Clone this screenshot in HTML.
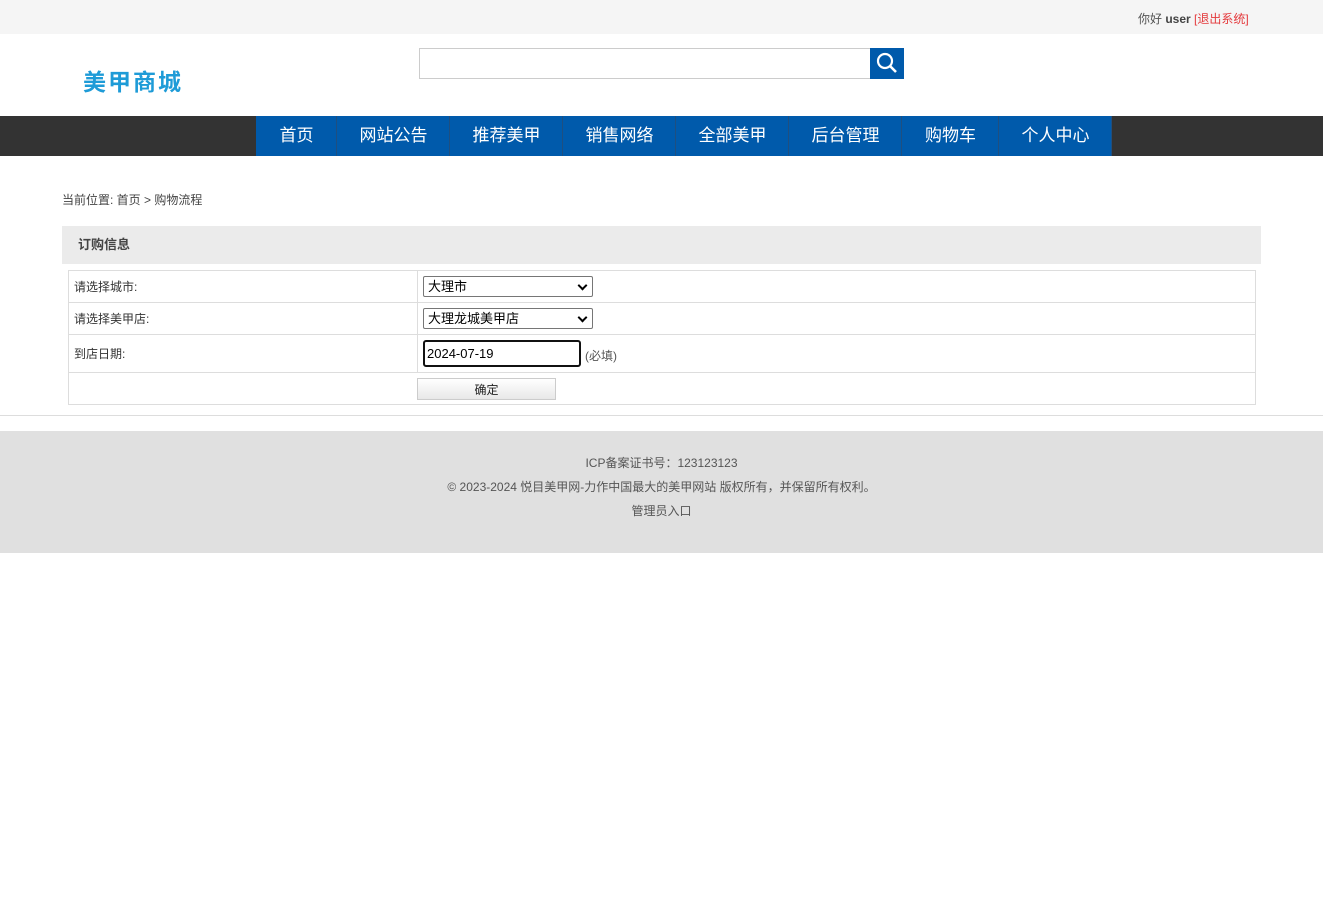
<!DOCTYPE html>
<html><head><meta charset="utf-8"><style>
*{margin:0;padding:0;box-sizing:border-box}
body{width:1323px;height:914px;background:#fff;font-family:"Liberation Sans","Microsoft YaHei","Noto Sans CJK SC",sans-serif;position:relative;overflow:hidden;color:#333}
.a{position:absolute}
.top{left:0;top:0;width:1323px;height:34px;background:#f5f5f5}
.nav{left:0;top:116px;width:1323px;height:40px;background:#333}
.nav div{position:absolute;top:0;height:40px;background:#005aab;color:#fff;font-size:17px;line-height:40px;text-align:center;box-shadow:inset -1px 0 0 #1f4f80}
.f12{font-size:12px}
.tbl{left:68px;top:270px;width:1188px;border:1px solid #ddd;border-bottom:none}
.row{position:relative;border-bottom:1px solid #ddd}
.row .l{position:absolute;left:0;top:0;bottom:0;width:349px;border-right:1px solid #ddd;font-size:12px;padding-left:5px;display:flex;align-items:center}
.sel{position:absolute;left:354px;width:170px;height:21px;border:1px solid #767676;border-radius:2px;font-size:13px;padding-left:4px;line-height:19px;color:#000}
.sel:after{content:"";position:absolute;right:6px;top:5px;width:5px;height:5px;border-right:2px solid #000;border-bottom:2px solid #000;transform:rotate(45deg)}
</style></head><body>
<div class="a top"></div>
<div class="a f12" style="left:1138px;top:10px;color:#555">你好 <b style="color:#444">user</b> <span style="color:#e4393c">[退出系统]</span></div>
<div class="a" style="left:83px;top:63px;font-size:23px;color:#1e9bd7;font-weight:bold;letter-spacing:2px">美甲商城</div>
<div class="a" style="left:419px;top:48px;width:452px;height:31px;border:1px solid #ccc"></div>
<div class="a" style="left:870px;top:48px;width:34px;height:31px;background:#005aab">
<svg width="34" height="31"><circle cx="15" cy="13" r="7" fill="none" stroke="#fff" stroke-width="2.2"/><line x1="20" y1="18" x2="26" y2="24" stroke="#fff" stroke-width="2.6"/></svg></div>
<div class="a nav">
<div style="left:256px;width:81px">首页</div>
<div style="left:337px;width:113px">网站公告</div>
<div style="left:450px;width:113px">推荐美甲</div>
<div style="left:563px;width:113px">销售网络</div>
<div style="left:676px;width:113px">全部美甲</div>
<div style="left:789px;width:113px">后台管理</div>
<div style="left:902px;width:97px">购物车</div>
<div style="left:999px;width:113px">个人中心</div>
</div>
<div class="a f12" style="left:62px;top:191px;color:#444">当前位置: 首页 &gt; 购物流程</div>
<div class="a" style="left:62px;top:226px;width:1199px;height:38px;background:#ebebeb;font-size:13px;font-weight:bold;line-height:38px;padding-left:16px;color:#444">订购信息</div>
<div class="a tbl">
<div class="row" style="height:32px"><div class="l">请选择城市:</div><div class="sel" style="top:5px">大理市</div></div>
<div class="row" style="height:32px"><div class="l">请选择美甲店:</div><div class="sel" style="top:5px">大理龙城美甲店</div></div>
<div class="row" style="height:38px"><div class="l">到店日期:</div><div class="a" style="left:354px;top:5px;width:158px;height:27px;border:2px solid #111;border-radius:3px;font-size:13px;line-height:23px;padding-left:2px;color:#000">2024-07-19</div><div class="a" style="left:516px;top:12px;font-size:12px;color:#555">(必填)</div></div>
<div class="row" style="height:32px"><div class="a" style="left:348px;top:5px;width:139px;height:22px;border:1px solid #ccc;background:linear-gradient(#fff,#e8e8e8);font-size:12px;text-align:center;line-height:22px;color:#222">确定</div></div>
</div>
<div class="a" style="left:0;top:415px;width:1323px;height:1px;background:#ddd"></div>
<div class="a" style="left:0;top:431px;width:1323px;height:122px;background:#e0e0e0;text-align:center;font-size:12px;color:#555;line-height:24px;padding-top:20px">ICP备案证书号：123123123<br>© 2023-2024 悦目美甲网-力作中国最大的美甲网站 版权所有，并保留所有权利。<br>管理员入口</div>
</body></html>
